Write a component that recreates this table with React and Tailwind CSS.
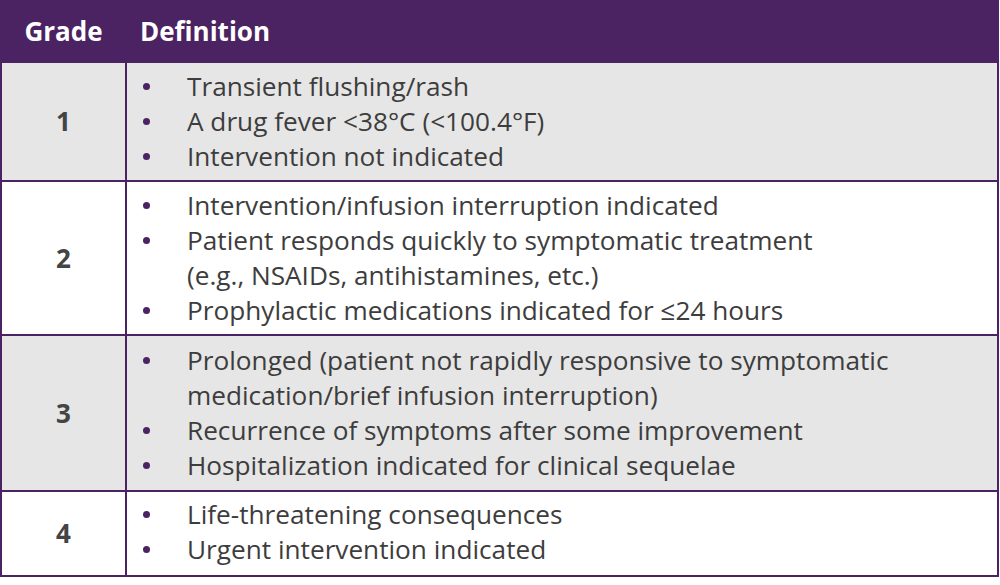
const rows = [
  { grade: '1', h: 'h-[119px]', pad: '', bg: 'bg-[#e6e6e6]', items: [['Transient flushing/rash'], ['A drug fever <38°C (<100.4°F)'], ['Intervention not indicated']] },
  {
    grade: '2',
    h: 'h-[154px]',
    pad: '',
    bg: 'bg-white',
    items: [
      ['Intervention/infusion interruption indicated'],
      ['Patient responds quickly to symptomatic treatment', '(e.g., NSAIDs, antihistamines, etc.)'],
      ['Prophylactic medications indicated for ≤24 hours'],
    ],
  },
  {
    grade: '3',
    h: 'h-[156px]',
    pad: '',
    bg: 'bg-[#e6e6e6]',
    items: [
      ['Prolonged (patient not rapidly responsive to symptomatic', 'medication/brief infusion interruption)'],
      ['Recurrence of symptoms after some improvement'],
      ['Hospitalization indicated for clinical sequelae'],
    ],
  },
  { grade: '4', h: 'h-[85px]', pad: 'pb-[4px]', bg: 'bg-white', items: [['Life-threatening consequences'], ['Urgent intervention indicated']] },
];

export default function App() {
  return (
    <div className="w-[1000px] h-[585px] bg-white font-['Open_Sans',sans-serif]">
      <div className="w-[999px] border-2 border-[#4b2362]">
        <div className="flex h-[59px] items-center bg-[#4b2362] text-white text-[26px] font-bold">
          <div className="w-[123px] text-center">Grade</div>
          <div className="pl-[15px]">Definition</div>
        </div>
        {rows.map((r) => (
          <div key={r.grade} className={`flex border-t-2 border-[#4b2362] ${r.h} ${r.bg}`}>
            <div className="w-[123px] shrink-0 flex items-center justify-center text-[26px] font-bold text-[#444]">
              {r.grade}
            </div>
            <ul className={`flex-1 flex flex-col justify-center border-l-2 border-[#4b2362] text-[26.2px] leading-[35px] text-[#3d3d3d] ${r.pad}`}>
              {r.items.map((lines, i) => (
                <li key={i} className="flex">
                  <span className="w-[60px] h-[35px] shrink-0 flex items-center pl-[16px]">
                    <span className="w-[7px] h-[7px] rounded-full bg-[#4b2362]" />
                  </span>
                  <span>
                    {lines.map((l, j) => (
                      <span key={j} className="block">{l}</span>
                    ))}
                  </span>
                </li>
              ))}
            </ul>
          </div>
        ))}
      </div>
    </div>
  );
}
